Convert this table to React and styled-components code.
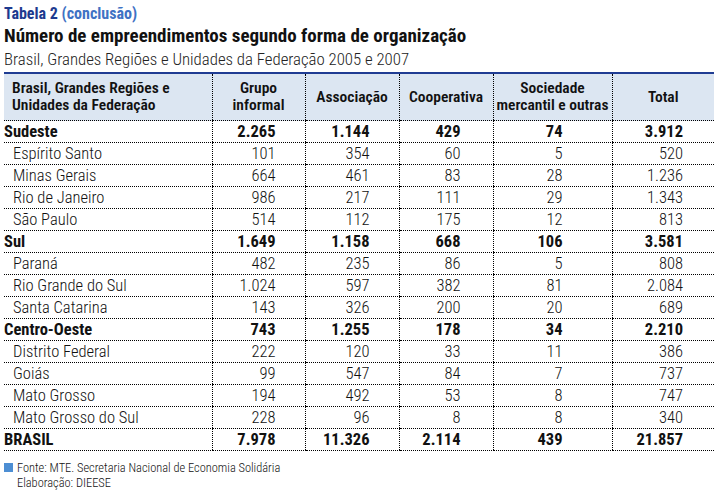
import React from "react";
import styled, { createGlobalStyle } from "styled-components";

const GlobalStyle = createGlobalStyle`
  body {
    margin: 0;
    background: #fff;
    font-family: "Roboto Condensed", "Liberation Sans Narrow", "DejaVu Sans Condensed", "Liberation Sans", sans-serif;
    color: #111;
  }
`;

const Page = styled.div`
  width: 714px;
  padding: 4px 0 0 4px;
  box-sizing: border-box;
`;

const Caption = styled.div`
  font-size: 16px;
  font-weight: 700;
  line-height: 20px;
  color: #1d3a8f;

  span {
    color: #3f72c4;
  }
`;

const Title = styled.h1`
  margin: 0;
  font-size: 19px;
  font-weight: 700;
  line-height: 24px;
  color: #111;
`;

const Subtitle = styled.div`
  font-size: 16.8px;
  font-weight: 300;
  line-height: 22px;
  color: #222;
`;

const Table = styled.table`
  margin-top: 2px;
  width: 710px;
  border-collapse: collapse;
  table-layout: fixed;
  border-top: 2px solid #1f3c93;
  font-size: 16.5px;
`;

const Th = styled.th`
  background: #dce6f2;
  height: 46px;
  padding: 0 0 0 ${(p) => (p.$left ? 8 : 0)}px;
  font-size: 15.5px;
  font-weight: 600;
  line-height: 17px;
  text-align: ${(p) => (p.$left ? "left" : "center")};
  white-space: nowrap;
  border-bottom: 1px dotted #000;
  border-left: ${(p) => (p.$left ? "none" : "1px dotted #000")};
  color: #111;
`;

const Td = styled.td`
  height: 21px;
  padding: 0 ${(p) => p.$pad || 30}px 0 0;
  text-align: right;
  line-height: 21px;
  border-bottom: 1px dotted #000;
  border-left: 1px dotted #000;
  font-weight: ${(p) => (p.$bold ? 700 : 300)};
  white-space: nowrap;
`;

const Label = styled.td`
  height: 21px;
  padding: 0 0 0 ${(p) => (p.$bold ? 0 : 9)}px;
  text-align: left;
  line-height: 21px;
  border-bottom: 1px dotted #000;
  font-weight: ${(p) => (p.$bold ? 700 : 300)};
  white-space: nowrap;
`;

const Footer = styled.div`
  margin-top: 9px;
  font-size: 12.4px;
  font-weight: 300;
  line-height: 15px;
  color: #111;
`;

const FootLine = styled.div`
  display: flex;
  align-items: center;
  gap: 4px;
  padding-left: ${(p) => (p.$indent ? 13 : 0)}px;
`;

const Square = styled.span`
  width: 9px;
  height: 9px;
  background: #4d8ed3;
  display: inline-block;
`;

const pads = [29, 29, 32, 49, 31];

const rows = [
  ["Sudeste", ["2.265", "1.144", "429", "74", "3.912"], true],
  ["Espírito Santo", ["101", "354", "60", "5", "520"]],
  ["Minas Gerais", ["664", "461", "83", "28", "1.236"]],
  ["Rio de Janeiro", ["986", "217", "111", "29", "1.343"]],
  ["São Paulo", ["514", "112", "175", "12", "813"]],
  ["Sul", ["1.649", "1.158", "668", "106", "3.581"], true],
  ["Paraná", ["482", "235", "86", "5", "808"]],
  ["Rio Grande do Sul", ["1.024", "597", "382", "81", "2.084"]],
  ["Santa Catarina", ["143", "326", "200", "20", "689"]],
  ["Centro-Oeste", ["743", "1.255", "178", "34", "2.210"], true],
  ["Distrito Federal", ["222", "120", "33", "11", "386"]],
  ["Goiás", ["99", "547", "84", "7", "737"]],
  ["Mato Grosso", ["194", "492", "53", "8", "747"]],
  ["Mato Grosso do Sul", ["228", "96", "8", "8", "340"]],
  ["BRASIL", ["7.978", "11.326", "2.114", "439", "21.857"], true],
];

export default function App() {
  return (
    <Page>
      <GlobalStyle />
      <Caption>
        Tabela 2 <span>(conclusão)</span>
      </Caption>
      <Title>Número de empreendimentos segundo forma de organização</Title>
      <Subtitle>Brasil, Grandes Regiões e Unidades da Federação 2005 e 2007</Subtitle>
      <Table>
        <colgroup>
          <col style={{ width: 208 }} />
          <col style={{ width: 93 }} />
          <col style={{ width: 94 }} />
          <col style={{ width: 94 }} />
          <col style={{ width: 119 }} />
          <col style={{ width: 102 }} />
        </colgroup>
        <thead>
          <tr>
            <Th $left>
              Brasil, Grandes Regiões e
              <br />
              Unidades da Federação
            </Th>
            <Th>
              Grupo
              <br />
              informal
            </Th>
            <Th>Associação</Th>
            <Th>Cooperativa</Th>
            <Th>
              Sociedade
              <br />
              mercantil e outras
            </Th>
            <Th>Total</Th>
          </tr>
        </thead>
        <tbody>
          {rows.map(([name, vals, bold]) => (
            <tr key={name}>
              <Label $bold={bold}>{name}</Label>
              {vals.map((v, i) => (
                <Td key={i} $bold={bold} $pad={pads[i]}>
                  {v}
                </Td>
              ))}
            </tr>
          ))}
        </tbody>
      </Table>
      <Footer>
        <FootLine>
          <Square />
          Fonte: MTE. Secretaria Nacional de Economia Solidária
        </FootLine>
        <FootLine $indent>Elaboração: DIEESE</FootLine>
      </Footer>
    </Page>
  );
}
